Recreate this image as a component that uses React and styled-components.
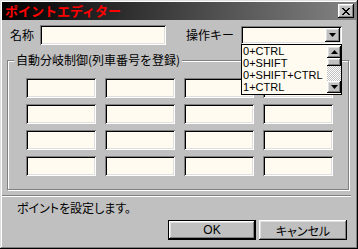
import React from 'react';
import styled, { createGlobalStyle } from 'styled-components';

const Global = createGlobalStyle`
  html, body { margin: 0; padding: 0; background: #c0c0c0; }
  body { font-family: "Liberation Sans", "Noto Sans CJK JP", sans-serif; font-size: 12px; color: #000; }
  * { box-sizing: border-box; }
`;

const raised = `
  box-shadow: inset -1px -1px 0 #000, inset 1px 1px 0 #fff, inset -2px -2px 0 #808080, inset 2px 2px 0 #dfdfdf;
`;
const sunken = `
  box-shadow: inset 1px 1px 0 #808080, inset -1px -1px 0 #fff, inset 2px 2px 0 #000, inset -2px -2px 0 #dfdfdf;
`;

const Window = styled.div`
  width: 358px;
  height: 249px;
  background: #c0c0c0;
  padding: 2px;
  display: flex;
  flex-direction: column;
  box-shadow: inset -1px -1px 0 #000, inset 1px 1px 0 #dfdfdf, inset -2px -2px 0 #808080, inset 2px 2px 0 #fff;
`;

const TitleBar = styled.div`
  height: 18px;
  display: flex;
  align-items: center;
  justify-content: space-between;
  background: linear-gradient(to right, #000 0%, #848484 100%);
  padding: 0 2px 0 3px;
`;

const TitleText = styled.span`
  font-family: "Noto Sans CJK JP", sans-serif;
  font-weight: 700;
  font-size: 13px;
  line-height: 18px;
  color: #ff0000;
`;

const CloseButton = styled.div`
  width: 16px;
  height: 14px;
  background: #c0c0c0;
  ${raised}
  display: flex;
  align-items: center;
  justify-content: center;
`;

const TopRow = styled.div`
  display: flex;
  align-items: center;
  height: 20px;
  margin-top: 5px;
  padding-left: 8px;
`;

const Label = styled.span`
  font-family: "Noto Sans CJK JP", sans-serif;
  font-size: 12px;
  line-height: 16px;
  margin-right: ${p => p.$gap}px;
`;

const Field = styled.div`
  width: ${p => p.$w}px;
  height: ${p => p.$h || 20}px;
  background: #fffbf0;
  ${sunken}
  margin-right: ${p => p.$mr || 0}px;
`;

const Combo = styled.div`
  position: relative;
  width: 101px;
  height: 18px;
  background: #fffbf0;
  ${sunken}
  display: flex;
  justify-content: flex-end;
  padding: 2px;
`;

const ArrowButton = styled.div`
  width: ${p => p.$w || 15}px;
  height: ${p => p.$h || 14}px;
  background: #c0c0c0;
  ${raised}
  display: flex;
  align-items: center;
  justify-content: center;
  flex-shrink: 0;
`;

const DropList = styled.div`
  position: absolute;
  top: 18px;
  left: 0;
  width: 101px;
  height: 51px;
  border: 1px solid #000;
  background: #fffbf0;
  display: flex;
  z-index: 5;
`;

const Items = styled.div`
  flex: 1;
  display: flex;
  flex-direction: column;
  padding-left: 1px;
`;

const Item = styled.div`
  font-family: "Liberation Sans", sans-serif;
  font-size: 11px;
  height: 12px;
  line-height: 12px;
  white-space: nowrap;
`;

const ScrollBar = styled.div`
  width: 14px;
  margin: 1px 0 1px 0;
  display: flex;
  flex-direction: column;
`;

const Thumb = styled.div`
  height: 8px;
  background: #c0c0c0;
  ${raised}
`;

const Track = styled.div`
  flex: 1;
  background-color: #c0c0c0;
  background-image: repeating-conic-gradient(#ffffff 0 25%, #c0c0c0 0 50%);
  background-size: 2px 2px;
`;

const Group = styled.div`
  position: relative;
  margin: 15px 0 0 5px;
  width: 342px;
  height: 130px;
  border: 1px solid #808080;
  box-shadow: inset 1px 1px 0 #fff, 1px 1px 0 #fff;
  padding: 17px 0 0 18px;
`;

const Legend = styled.span`
  position: absolute;
  top: -9px;
  left: 6px;
  padding: 0 2px;
  background: #c0c0c0;
  font-family: "Noto Sans CJK JP", sans-serif;
  font-size: 12px;
  line-height: 16px;
`;

const Grid = styled.div`
  display: grid;
  grid-template-columns: repeat(4, 70px);
  grid-auto-rows: 20px;
  column-gap: 9px;
  row-gap: 6px;
`;

const Separator = styled.div`
  margin: 5px 5px 0 0;
  height: 2px;
  border-top: 1px solid #808080;
  border-bottom: 1px solid #fff;
`;

const Status = styled.div`
  margin-top: 3px;
  padding-left: 15px;
  font-family: "Noto Sans CJK JP", sans-serif;
  font-size: 12px;
  line-height: 16px;
  font-feature-settings: "palt";
`;

const ButtonRow = styled.div`
  margin-top: 4px;
  display: flex;
  justify-content: flex-end;
  gap: 3px;
  padding-right: 9px;
`;

const Button = styled.div`
  width: 88px;
  height: 20px;
  background: #c0c0c0;
  display: flex;
  align-items: center;
  justify-content: center;
  font-family: "Liberation Sans", "Noto Sans CJK JP", sans-serif;
  font-size: 12px;
  font-feature-settings: "palt";
  border: ${p => (p.$default ? '1px solid #000' : 'none')};
  ${raised}
`;

const DownTri = () => (
  <svg width="7" height="4" viewBox="0 0 7 4"><path d="M0 0h7L3.5 4z" fill="#000" /></svg>
);
const UpTri = () => (
  <svg width="7" height="4" viewBox="0 0 7 4"><path d="M0 4h7L3.5 0z" fill="#000" /></svg>
);

const CloseX = () => (
  <svg width="8" height="7" viewBox="0 0 8 7" shapeRendering="crispEdges">
    <path d="M0 0h2v1h1v1h2v-1h1v-1h2v1h-1v1h-1v1h-1v1h1v1h1v1h1v1h-2v-1h-1v-1h-2v1h-1v1h-2v-1h1v-1h1v-1h1v-1h-1v-1h-1v-1h-1z" fill="#000" />
  </svg>
);

const items = ['0+CTRL', '0+SHIFT', '0+SHIFT+CTRL', '1+CTRL'];

export default function App() {
  return (
    <>
      <Global />
      <Window>
        <TitleBar>
          <TitleText>ポイントエディター</TitleText>
          <CloseButton><CloseX /></CloseButton>
        </TitleBar>
        <TopRow>
          <Label $gap={6}>名称</Label>
          <Field $w={126} $mr={20} />
          <Label $gap={7}>操作キー</Label>
          <Combo>
            <ArrowButton $w={15} $h={14}><DownTri /></ArrowButton>
            <DropList>
              <Items>
                {items.map(t => <Item key={t}>{t}</Item>)}
              </Items>
              <ScrollBar>
                <ArrowButton $w={14} $h={12}><UpTri /></ArrowButton>
                <Thumb />
                <Track />
                <ArrowButton $w={14} $h={12}><DownTri /></ArrowButton>
              </ScrollBar>
            </DropList>
          </Combo>
        </TopRow>
        <Group>
          <Legend>自動分岐制御(列車番号を登録)</Legend>
          <Grid>
            {Array.from({ length: 16 }).map((_, i) => <Field key={i} $w={70} />)}
          </Grid>
        </Group>
        <Separator />
        <Status>ポイントを設定します。</Status>
        <ButtonRow>
          <Button $default>OK</Button>
          <Button>キャンセル</Button>
        </ButtonRow>
      </Window>
    </>
  );
}
